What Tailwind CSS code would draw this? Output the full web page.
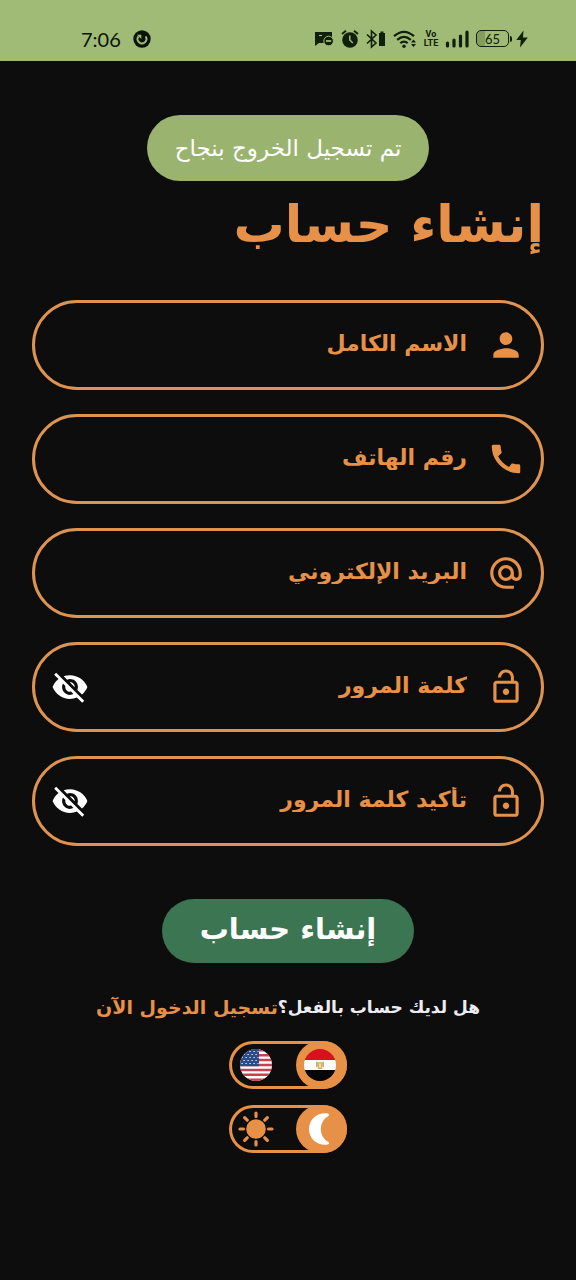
<!DOCTYPE html>
<html lang="ar" dir="rtl">
<head>
<meta charset="utf-8">
<meta name="viewport" content="width=device-width, initial-scale=1">
<title>إنشاء حساب</title>
<script src="https://cdn.jsdelivr.net/npm/@tailwindcss/browser@4"></script>
</head>
<body class="min-h-screen bg-[#0d0d0d] font-['DejaVu_Sans',sans-serif] text-[#e69147]">

<svg class="hidden" aria-hidden="true">
  <symbol id="lock" viewBox="0 0 24 24"><path d="M12 17c1.1 0 2-.9 2-2s-.9-2-2-2-2 .9-2 2 .9 2 2 2zm6-9h-1V6c0-2.760-2.240-5-5-5S7 3.240 7 6h1.900c0-1.710 1.390-3.100 3.100-3.100 1.710 0 3.100 1.390 3.100 3.100v2H6c-1.100 0-2 .9-2 2v10c0 1.100.9 2 2 2h12c1.100 0 2-.9 2-2V10c0-1.100-.9-2-2-2zm0 12H6V10h12v10z"/></symbol>
  <symbol id="eye-off" viewBox="0 0 24 24"><path d="M12 7c2.760 0 5 2.240 5 5 0 .65-.13 1.260-.36 1.830l2.920 2.920c1.510-1.260 2.700-2.890 3.430-4.750-1.730-4.390-6-7.500-11-7.500-1.400 0-2.740.25-3.980.7l2.160 2.160C10.740 7.130 11.350 7 12 7zM2 4.270l2.280 2.280.46.46C3.080 8.300 1.780 10.020 1 12c1.730 4.390 6 7.500 11 7.500 1.550 0 3.030-.3 4.380-.84l.42.42L19.730 22 21 20.730 3.270 3 2 4.270zM7.530 9.800l1.550 1.550c-.05.21-.08.43-.08.65 0 1.660 1.340 3 3 3 .22 0 .44-.03.65-.08l1.550 1.550c-.67.33-1.410.53-2.200.53-2.760 0-5-2.240-5-5 0-.79.2-1.530.53-2.200zm4.310-.78l3.150 3.150.02-.16c0-1.660-1.340-3-3-3l-.17.01z"/></symbol>
</svg>

<header dir="ltr" class="flex items-center justify-between bg-[#9fbb76] pt-4 pr-12 pl-[81px] text-[#10200a]">
  <div class="flex h-[45px] items-center gap-3">
    <time class="font-['Lato',sans-serif] text-xl leading-6 text-[#0b1406]">7:06</time>
    <svg class="size-[18px]" viewBox="0 0 18 18" aria-hidden="true"><circle cx="9" cy="9" r="8.700" fill="#0b1406"/><path d="M5.400 6.400A4.400 4.400 0 1 0 12.600 6.400" fill="none" stroke="#9fbb76" stroke-width="1.900"/><path d="M4 4.700h4.300v4.300z" fill="#9fbb76"/></svg>
  </div>
  <div class="flex h-[45px] items-center gap-[7px]" aria-hidden="true">
    <svg class="h-5 w-5" viewBox="0 0 20 20"><path d="M1 3h17v5.500a5.300 5.300 0 0 0-8 5.500H5l-4 3z" fill="currentColor"/><path d="M5 6.500h3" stroke="#9fbb76" stroke-width="1.200"/><circle cx="14.600" cy="12" r="4.800" fill="currentColor" stroke="#9fbb76"/><path d="M12 12h5.200" stroke="#9fbb76" stroke-width="1.800"/></svg>
    <svg class="h-5 w-[18px]" viewBox="0 0 18 20"><circle cx="9" cy="11" r="7.800" fill="currentColor"/><path d="M1 5l4-3.300M17 5l-4-3.300" stroke="currentColor" stroke-width="2"/><path d="M8.800 6.500V11l3 3" fill="none" stroke="#9fbb76" stroke-width="1.500"/></svg>
    <svg class="h-5 w-5" viewBox="0 0 20 20"><path d="M1 5.500l9 8.500-4.500 4V2L10 6l-9 8.500" fill="none" stroke="currentColor" stroke-width="1.600"/><path d="M14.500 4V2.500h3V4H19v13h-6V4z" fill="currentColor"/></svg>
    <svg class="h-5 w-6" viewBox="0 0 24 20"><path d="M1 7.200Q11 -1.500 21 7.200M4.200 10.800Q11 5 17.800 10.800M7.300 14.200Q11 11 14.700 14.200" fill="none" stroke="currentColor" stroke-width="2.300"/><circle cx="11" cy="17.300" r="1.700" fill="currentColor"/><path d="M18 13.500l2.500-3 2.500 3zM18 15h5l-2.500 3z" fill="currentColor"/></svg>
    <div class="flex w-3.5 flex-col items-center font-['Roboto',sans-serif] text-[9px] leading-[9px] font-bold"><span>Vo</span><span>LTE</span></div>
    <svg class="h-5 w-6" viewBox="0 0 24 20"><path d="M2.500 17v-3M9 17v-6M15.500 17V7M22 17V3" stroke="currentColor" stroke-width="3.200" stroke-linecap="round"/></svg>
    <div class="flex items-center gap-1">
      <div class="flex items-center gap-px">
        <span class="flex h-[17px] w-[33px] items-center justify-center rounded-[5px] border border-current bg-linear-to-r from-[#839d60] from-25% to-[#9fbb76] to-25% font-['Lato',sans-serif] text-[13px] leading-4">65</span>
        <span class="h-1.5 w-0.5 rounded-r bg-current"></span>
      </div>
      <svg class="h-5 w-3" viewBox="0 0 12 20"><path d="M7.500 1.500L.3 11h4.500L4 18.500 11.800 8.500H7z" fill="currentColor"/></svg>
    </div>
  </div>
</header>

<main class="mx-auto flex max-w-2xl flex-col px-8 pt-[54px]">
  <div role="status" class="flex h-[66px] items-center self-center rounded-full bg-[#9ab470] px-7 text-[23px] leading-8 text-white">تم تسجيل الخروج بنجاح</div>

  <h1 class="pt-2 text-[51px] leading-[72px] font-bold">إنشاء حساب</h1>

  <form class="flex flex-col pt-[39px]" onsubmit="return false">
    <div class="flex flex-col gap-6">
      <div class="flex h-[90px] items-center gap-5 rounded-full border-3 border-[#df9350] px-4">
        <svg class="size-[38px] shrink-0" viewBox="0 0 24 24" fill="currentColor" aria-hidden="true"><path d="M12 12c2.210 0 4-1.790 4-4s-1.790-4-4-4-4 1.790-4 4 1.790 4 4 4zm0 2c-2.670 0-8 1.340-8 4v2h16v-2c0-2.660-5.330-4-8-4z"/></svg>
        <input type="text" aria-label="الاسم الكامل" placeholder="الاسم الكامل" class="h-16 min-w-0 flex-1 bg-transparent pb-1 text-[22px] font-bold outline-none placeholder:text-[#e69147] placeholder:opacity-100">
      </div>
      <div class="flex h-[90px] items-center gap-5 rounded-full border-3 border-[#df9350] px-4">
        <svg class="size-[38px] shrink-0" viewBox="0 0 24 24" fill="currentColor" aria-hidden="true"><path d="M20.010 15.380c-1.230 0-2.420-.2-3.530-.56-.35-.12-.74-.03-1.010.24l-1.570 1.970c-2.830-1.350-5.480-3.900-6.890-6.830l1.950-1.660c.27-.28.35-.67.24-1.020-.37-1.110-.56-2.300-.56-3.530 0-.54-.45-.99-.99-.99H4.190C3.650 3 3 3.240 3 3.990 3 13.280 10.730 21 20.010 21c.71 0 .99-.63.99-1.180v-3.450c0-.54-.45-.99-.99-.99z"/></svg>
        <input type="tel" dir="rtl" aria-label="رقم الهاتف" placeholder="رقم الهاتف" class="h-16 min-w-0 flex-1 bg-transparent pb-1 text-[22px] font-bold outline-none placeholder:text-[#e69147] placeholder:opacity-100">
      </div>
      <div class="flex h-[90px] items-center gap-5 rounded-full border-3 border-[#df9350] px-4">
        <svg class="size-[38px] shrink-0" viewBox="0 0 24 24" fill="currentColor" aria-hidden="true"><path d="M12 2C6.480 2 2 6.480 2 12s4.480 10 10 10h5v-2h-5c-4.340 0-8-3.660-8-8s3.660-8 8-8 8 3.660 8 8v1.430c0 .79-.71 1.570-1.500 1.570s-1.500-.78-1.500-1.570V12c0-2.760-2.240-5-5-5s-5 2.240-5 5 2.240 5 5 5c1.380 0 2.640-.56 3.540-1.470.65.89 1.770 1.470 2.960 1.470 1.970 0 3.500-1.600 3.500-3.570V12c0-5.520-4.480-10-10-10zm0 13c-1.660 0-3-1.340-3-3s1.340-3 3-3 3 1.340 3 3-1.340 3-3 3z"/></svg>
        <input type="email" aria-label="البريد الإلكتروني" placeholder="البريد الإلكتروني" class="h-16 min-w-0 flex-1 bg-transparent pb-1 text-[22px] font-bold outline-none placeholder:text-[#e69147] placeholder:opacity-100">
      </div>
      <div class="flex h-[90px] items-center gap-5 rounded-full border-3 border-[#df9350] px-4">
        <svg class="size-[38px] shrink-0" fill="currentColor" aria-hidden="true"><use href="#lock"/></svg>
        <input type="password" aria-label="كلمة المرور" placeholder="كلمة المرور" class="h-16 min-w-0 flex-1 bg-transparent pb-1 text-[22px] font-bold outline-none placeholder:text-[#e69147] placeholder:opacity-100">
        <button type="button" aria-label="إظهار كلمة المرور" class="shrink-0 text-white"><svg class="size-[38px]" fill="currentColor" aria-hidden="true"><use href="#eye-off"/></svg></button>
      </div>
      <div class="flex h-[90px] items-center gap-5 rounded-full border-3 border-[#df9350] px-4">
        <svg class="size-[38px] shrink-0" fill="currentColor" aria-hidden="true"><use href="#lock"/></svg>
        <input type="password" aria-label="تأكيد كلمة المرور" placeholder="تأكيد كلمة المرور" class="h-16 min-w-0 flex-1 bg-transparent pb-1 text-[22px] font-bold outline-none placeholder:text-[#e69147] placeholder:opacity-100">
        <button type="button" aria-label="إظهار تأكيد كلمة المرور" class="shrink-0 text-white"><svg class="size-[38px]" fill="currentColor" aria-hidden="true"><use href="#eye-off"/></svg></button>
      </div>
    </div>
    <button type="submit" class="mt-[53px] h-16 w-[252px] self-center rounded-full bg-[#3c7551] pb-1 text-[29px] leading-10 font-bold text-white">إنشاء حساب</button>
  </form>

  <p class="flex items-center justify-center pt-7 leading-8 font-bold whitespace-nowrap"><span class="text-[17px] leading-8 text-[#ececf2]">هل لديك حساب بالفعل؟</span><a href="#" class="text-[19px] leading-8">تسجيل الدخول الآن</a></p>

  <div class="flex flex-col items-center gap-4 pt-[18px]">
    <label class="flex h-12 w-[118px] cursor-pointer justify-between rounded-full pl-[3px] inset-ring-3 inset-ring-[#e69147]">
      <input type="checkbox" role="switch" checked aria-label="اللغة العربية" class="sr-only">
      <span class="flex h-12 w-[51px] items-center justify-center rounded-full bg-[#e69147] pr-[3px]">
        <svg class="size-8 rounded-full" viewBox="0 0 32 32" aria-hidden="true"><path d="M0 0h32v11H0z" fill="#d8101f"/><path d="M0 11h32v10H0z" fill="#fff"/><path d="M0 21h32v11H0z" fill="#050505"/><path d="M12 12.500l3 1 1-1 1 1 3-1v6l-2-1 .5 2.500h-5l.5-2.500-2 1z" fill="#d3b36a"/><path d="M15 14.500h2v4h-2z" fill="#f0dfae"/></svg>
      </span>
      <span class="flex size-12 items-center justify-center">
        <svg class="size-8 rounded-full" viewBox="0 0 32 32" aria-hidden="true"><path d="M0 0h32v32H0z" fill="#fff"/><path d="M0 1.250h32M0 6.200h32M0 11.100h32M0 16h32M0 20.900h32M0 25.800h32M0 30.700h32" stroke="#c6414f" stroke-width="2.460"/><path d="M0 0h19v17.200H0z" fill="#2d4b86"/><path d="M1.500 2.500h17M3.500 5.500h15M1.500 8.500h17M3.500 11.500h15M1.500 14.500h17" stroke="#fff" stroke-width="1.100" stroke-dasharray="1.200 2.800"/></svg>
      </span>
    </label>
    <label class="flex h-12 w-[118px] cursor-pointer justify-between rounded-full pl-[3px] inset-ring-3 inset-ring-[#e69147]">
      <input type="checkbox" role="switch" checked aria-label="الوضع الداكن" class="sr-only">
      <span class="flex h-12 w-[51px] items-center justify-center rounded-full bg-[#e69147] pr-[3px]">
        <svg class="size-9" viewBox="0 0 36 36" aria-hidden="true"><path d="M24.500 2.200C14 1.500 7 9 7 18s7 16.500 17.500 15.800c2.500-.2 3.500-1.700 1.500-3C16.500 25 16.500 11 26 5.200c2-1.300 1-2.800-1.500-3z" fill="#fff"/></svg>
      </span>
      <span class="flex size-12 items-center justify-center">
        <svg class="size-9" viewBox="0 0 36 36" aria-hidden="true"><circle cx="18" cy="18" r="9.800" fill="#e69147"/><path d="M18 2v3.500M18 30.500V34M2 18h3.500M30.500 18H34M6.700 6.700l2.500 2.500M26.800 26.800l2.500 2.500M6.700 29.300l2.500-2.500M26.800 9.200l2.500-2.500" stroke="#e69147" stroke-width="3.200" stroke-linecap="round"/></svg>
      </span>
    </label>
  </div>
</main>
</body>
</html>
